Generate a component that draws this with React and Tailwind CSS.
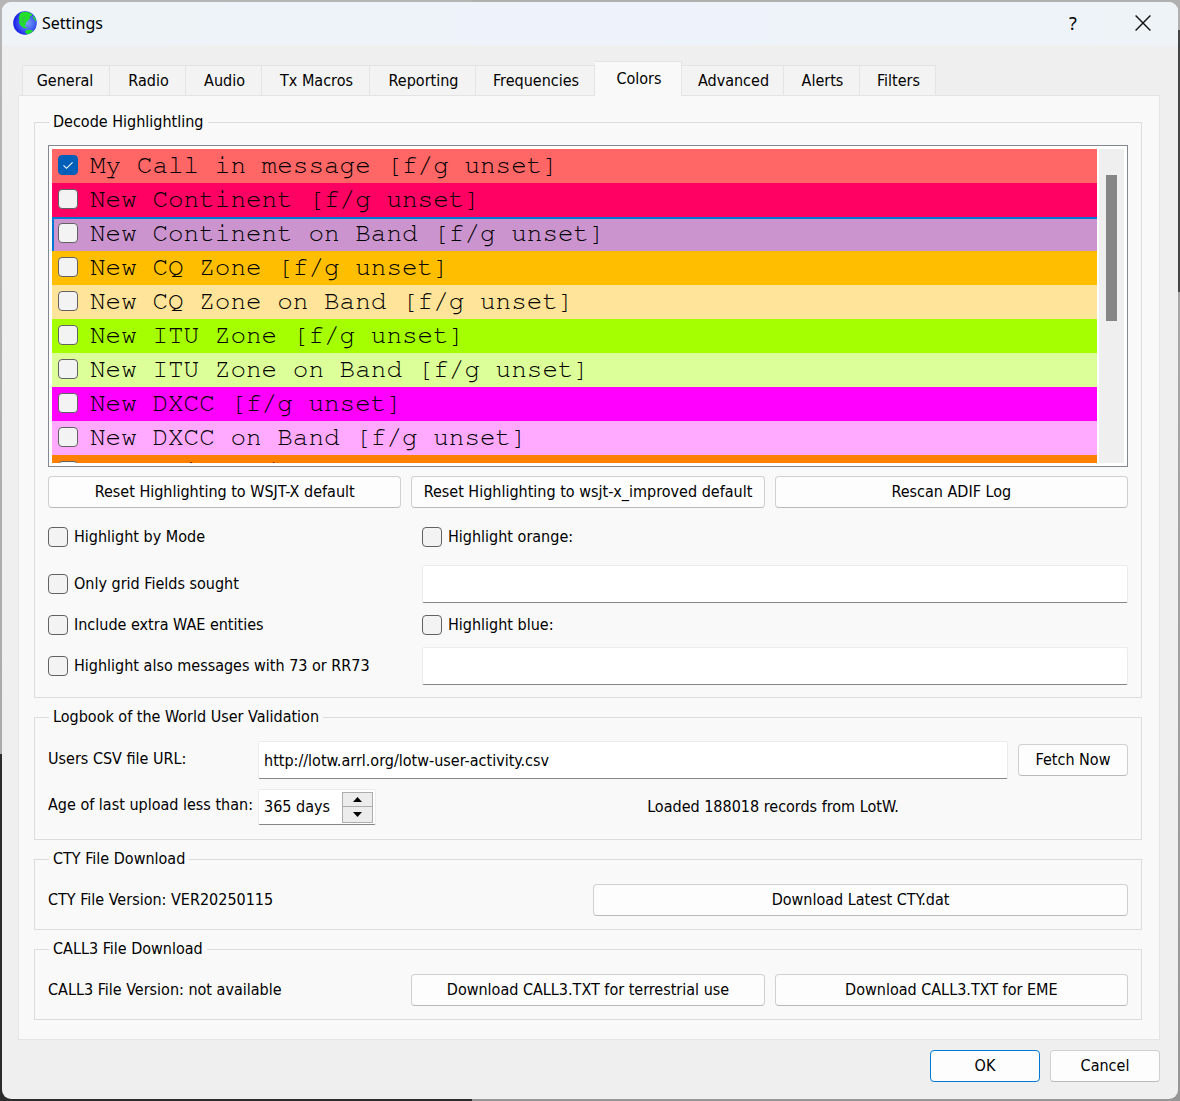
import { useState } from "react";

const TABS = [
  { name: "General", width: "w-[88px]" },
  { name: "Radio", width: "w-[76px]" },
  { name: "Audio", width: "w-[76px]" },
  { name: "Tx Macros", width: "w-[108px]" },
  { name: "Reporting", width: "w-[106px]" },
  { name: "Frequencies", width: "w-[119px]" },
  { name: "Colors", width: "w-[87px]" },
  { name: "Advanced", width: "w-[102px]" },
  { name: "Alerts", width: "w-[76px]" },
  { name: "Filters", width: "w-[76px]" },
];

const HIGHLIGHTS = [
  { text: "My Call in message [f/g unset]", color: "bg-[#ff6666]", on: true },
  { text: "New Continent [f/g unset]", color: "bg-[#ff0063]" },
  { text: "New Continent on Band [f/g unset]", color: "bg-[#cc94cf]", current: true },
  { text: "New CQ Zone [f/g unset]", color: "bg-[#ffbf00]" },
  { text: "New CQ Zone on Band [f/g unset]", color: "bg-[#ffe499]" },
  { text: "New ITU Zone [f/g unset]", color: "bg-[#a6ff00]" },
  { text: "New ITU Zone on Band [f/g unset]", color: "bg-[#ddff99]" },
  { text: "New DXCC [f/g unset]", color: "bg-[#ff00ff]" },
  { text: "New DXCC on Band [f/g unset]", color: "bg-[#ffaaff]" },
  { text: "New Grid [f/g unset]", color: "bg-[#ff8000]" },
];

function Box(props) {
  return (
    <span className="grid h-5 w-5 shrink-0">
      <input
        type="checkbox"
        className="peer col-start-1 row-start-1 h-5 w-5 appearance-none rounded-[4px] border border-[#626262] bg-[#f3f3f3] checked:border-[#005fb8] checked:bg-[#005fb8]"
        {...props}
      />
      <svg
        viewBox="0 0 20 20"
        className="pointer-events-none invisible col-start-1 row-start-1 h-5 w-5 peer-checked:visible"
        fill="none"
        stroke="#fff"
        strokeWidth="1.1"
      >
        <path d="M5.5 10.3 8.5 13.3 14.6 7.3" />
      </svg>
    </span>
  );
}

function Check({ label, className = "" }) {
  return (
    <label className={"flex h-5 items-center gap-1.5 " + className}>
      <Box />
      <span>{label}</span>
    </label>
  );
}

function Button({ children, className = "border-[#d0d0d0] border-b-[#bababa]" }) {
  return (
    <button type="button" className={"h-8 rounded-[4px] border bg-[#fdfdfd] text-center " + className}>
      {children}
    </button>
  );
}

function Group({ title, className, children }) {
  return (
    <fieldset className={"min-w-0 border border-[#dcdcdc] px-[13px] " + className}>
      <legend className="ml-px px-1 leading-[22px]">{title}</legend>
      {children}
    </fieldset>
  );
}

const FIELD =
  "h-[38px] w-full min-w-0 rounded-[2px] border border-[#ececec] border-b-[#868686] bg-white px-[5px] outline-none";

function Globe() {
  return (
    <svg viewBox="0 0 24 24" className="h-6 w-6">
      <defs>
        <radialGradient id="sea" cx="0.6" cy="0.5" r="0.55">
          <stop offset="0" stopColor="#7f9cf5" />
          <stop offset="0.6" stopColor="#3f5df2" />
          <stop offset="1" stopColor="#1f22e6" />
        </radialGradient>
      </defs>
      <circle cx="12" cy="12" r="11.8" fill="url(#sea)" />
      <path
        d="M6.8 2.4 9 1.2 13 .8 17 1.8 19 3.4 18.6 5.2 16.6 5 17.4 7 15.8 8.6 14.8 10.2 12.8 11.2 13 13.2 11.6 14.2 12.6 16 14.2 16.4 13.4 17.4 10.4 16.8 7.6 14.6 6 11.4 6.6 9 5.8 7.2 6.4 4.4Z"
        fill="#21e02c"
      />
      <path d="M20.4 4.4 22.6 7.8 23 11 21.4 8.8 19.8 6.6Z" fill="#21e02c" />
      <path d="M12.2 20 14.8 18.8 19.4 19.2 20 20.2 17.4 22.2 14.4 23.2 12.6 22Z" fill="#21e02c" />
      <path d="M9.4 7.4 12 6.6M8.6 11 11 10" stroke="#5b8f6a" strokeWidth="1" />
    </svg>
  );
}

export default function App() {
  const [active, setActive] = useState("Colors");
  const [days, setDays] = useState(365);

  return (
    <div className="relative flex min-h-screen flex-col bg-[#a6a6a6] p-[2px] font-['DejaVu_Sans_Condensed','Noto_Sans',sans-serif] text-[16px] leading-5 text-black">
      <div className="absolute inset-0 grid grid-cols-[2fr_3fr]" aria-hidden="true">
        <div className="bg-[linear-gradient(#b6b6b6_0%,#aaaaaa_68.5%,#2b2b2b_68.5%,#2b2b2b_100%)]" />
        <div className="bg-[linear-gradient(#b0b0b0_0%,#b0b0b0_2.7%,#444444_2.7%,#444444_26.5%,#a6a6a6_26.5%,#969696_100%)]" />
      </div>

      <main className="relative flex grow flex-col overflow-hidden rounded-[9px] bg-[#efefef]">
        <header className="flex h-[43px] items-center bg-[linear-gradient(90deg,#eef3f7,#eef3fb_50%,#edf3f7)] pb-0.5 pl-[11px]">
          <Globe />
          <h1 className="ml-[5px] grow font-['Noto_Sans',sans-serif]">Settings</h1>
          <button type="button" aria-label="Help" className="grid h-full w-[70px] place-items-center font-['Noto_Sans',sans-serif] text-[18px]">
            ?
          </button>
          <button type="button" aria-label="Close" className="grid h-full w-[70px] place-items-center">
            <svg viewBox="0 0 16 16" className="h-4 w-4" stroke="#111" strokeWidth="1.4">
              <path d="M.6.6 15.4 15.4M15.4.6.6 15.4" />
            </svg>
          </button>
        </header>

        <div className="flex grow flex-col pt-4 pr-[18px] pl-4">
          <div role="tablist" className="z-10 -mb-px flex items-end pl-1">
            {TABS.map((tab) => (
              <button
                key={tab.name}
                type="button"
                role="tab"
                aria-selected={tab.name === active}
                onClick={() => setActive(tab.name)}
                className={
                  tab.width +
                  " border-t border-r border-[#e4e4e4] pl-0.5 text-center first:border-l first:pr-1 " +
                  (tab.name === active ? "h-[35px] bg-[#f9f9f9]" : "h-[31px] border-b bg-[#f3f3f3]")
                }
              >
                {tab.name}
              </button>
            ))}
          </div>

          <section className="border border-[#e4e4e4] bg-[#f9f9f9] pt-[15px] pr-[17px] pb-[19px] pl-[15px]">
            <Group title="Decode Highlightling" className="pb-3">
              <div className="mt-3 flex h-[322px] gap-0.5 border border-[#828790] bg-white p-[3px]">
                <ul className="min-w-0 grow overflow-hidden font-[FreeMono,'Liberation_Mono',monospace] text-[26px]">
                  {HIGHLIGHTS.map((row) => (
                    <li key={row.text} className={row.color}>
                      <label
                        className={
                          "flex h-[34px] items-center gap-3 whitespace-pre " +
                          (row.current ? "border-t-2 border-l-2 border-[#0078d4] pb-1 pl-1" : "pb-0.5 pl-1.5")
                        }
                      >
                        <Box defaultChecked={row.on} />
                        <span>{row.text}</span>
                      </label>
                    </li>
                  ))}
                </ul>
                <div className="w-[25px] shrink-0 bg-[#efefef] pt-[26px]">
                  <div className="mx-auto h-[146px] w-[11px] bg-[#858585]" />
                </div>
              </div>

              <div className="mt-[9px] grid grid-cols-3 gap-2.5">
                <Button>Reset Highlighting to WSJT-X default</Button>
                <Button>Reset Highlighting to wsjt-x_improved default</Button>
                <Button>Rescan ADIF Log</Button>
              </div>

              <div className="mt-[19px] grid grid-cols-[374px_1fr] items-center gap-y-3">
                <Check label="Highlight by Mode" className="mb-1.5" />
                <Check label="Highlight orange:" className="mb-1.5" />
                <Check label="Only grid Fields sought" />
                <input type="text" aria-label="Orange callsigns" className={FIELD} />
                <Check label="Include extra WAE entities" />
                <Check label="Highlight blue:" />
                <Check label="Highlight also messages with 73 or RR73" />
                <input type="text" aria-label="Blue callsigns" className={FIELD} />
              </div>
            </Group>

            <Group title="Logbook of the World User Validation" className="mt-2 pb-3.5">
              <div className="mt-[13px] grid grid-cols-[200px_1fr] gap-x-2.5 gap-y-2.5">
                <label htmlFor="csv" className="mt-2 whitespace-nowrap">
                  Users CSV file URL:
                </label>
                <div className="flex items-center gap-2.5">
                  <input id="csv" type="text" defaultValue="http://lotw.arrl.org/lotw-user-activity.csv" className={FIELD} />
                  <Button className="w-[110px] shrink-0 border-[#d0d0d0] border-b-[#bababa]">Fetch Now</Button>
                </div>
                <label htmlFor="age" className="mt-1.5 whitespace-nowrap">
                  Age of last upload less than:
                </label>
                <div className="flex items-center">
                  <div className="flex h-9 w-[118px] shrink-0 items-center rounded-[2px] border border-[#ececec] border-b-[#868686] bg-white pr-0.5 pl-[5px]">
                    <input id="age" type="text" readOnly value={days + " days"} className="w-0 min-w-0 grow outline-none" />
                    <div className="grid h-[31px] w-[31px] grid-rows-2 divide-y divide-[#adadad] border border-[#adadad] bg-[#ececec]">
                      <button type="button" aria-label="Increase" onClick={() => setDays(days + 1)} className="grid place-items-center">
                        <svg viewBox="0 0 9 5" className="h-[5px] w-[9px]">
                          <path d="M0 5 4.5 0 9 5Z" />
                        </svg>
                      </button>
                      <button type="button" aria-label="Decrease" onClick={() => setDays(days - 1)} className="grid place-items-center">
                        <svg viewBox="0 0 9 5" className="h-[5px] w-[9px]">
                          <path d="M0 0 4.5 5 9 0Z" />
                        </svg>
                      </button>
                    </div>
                  </div>
                  <p className="grow pl-[42px] text-center">Loaded 188018 records from LotW.</p>
                </div>
              </div>
            </Group>

            <Group title="CTY File Download" className="mt-2 pb-[13px]">
              <div className="mt-3.5 grid grid-cols-[535px_1fr] items-center gap-2.5">
                <p>CTY File Version: VER20250115</p>
                <Button>Download Latest CTY.dat</Button>
              </div>
            </Group>

            <Group title="CALL3 File Download" className="mt-2 pb-[13px]">
              <div className="mt-3.5 grid grid-cols-3 items-center gap-2.5">
                <p>CALL3 File Version: not available</p>
                <Button>Download CALL3.TXT for terrestrial use</Button>
                <Button>Download CALL3.TXT for EME</Button>
              </div>
            </Group>
          </section>

          <footer className="mt-2.5 mb-[17px] flex justify-end gap-2.5">
            <Button className="w-[110px] border-[#0078d4]">OK</Button>
            <Button className="w-[110px] border-[#d0d0d0] border-b-[#bababa]">Cancel</Button>
          </footer>
        </div>
      </main>
    </div>
  );
}
